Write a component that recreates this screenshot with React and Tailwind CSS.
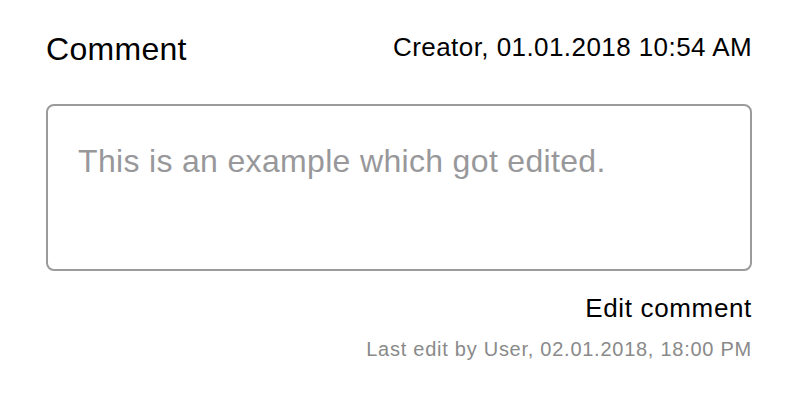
import React from "react";

const App = () => {
  return (
    <div
      className="w-[800px] h-[403px] bg-white pl-[46px] pr-[48px] pt-[33px] text-black"
      style={{ fontFamily: '"Liberation Sans", Arial, sans-serif' }}
    >
      <div className="flex justify-between items-start">
        <h2 className="text-[32px] leading-[32px] tracking-[0.3px] font-normal">Comment</h2>
        <span className="mt-[1px] text-[26px] leading-[26px] tracking-[0.43px]">Creator, 01.01.2018 10:54 AM</span>
      </div>

      <div className="mt-[39px] h-[167px] rounded-[8px] border-2 border-[#9b9b9b] pl-[30px] pt-[39px]">
        <p className="text-[32px] leading-[32px] tracking-[0.33px] text-[#98989b]">This is an example which got edited.</p>
      </div>

      <div className="flex flex-col items-end">
        <button className="mt-[24px] text-[26px] leading-[26px] tracking-[0.65px] text-black">Edit comment</button>
        <span className="mt-[18px] text-[20px] leading-[20px] tracking-[0.74px] text-[#8a8a8a]">
          Last edit by User, 02.01.2018, 18:00 PM
        </span>
      </div>
    </div>
  );
};

export default App;
